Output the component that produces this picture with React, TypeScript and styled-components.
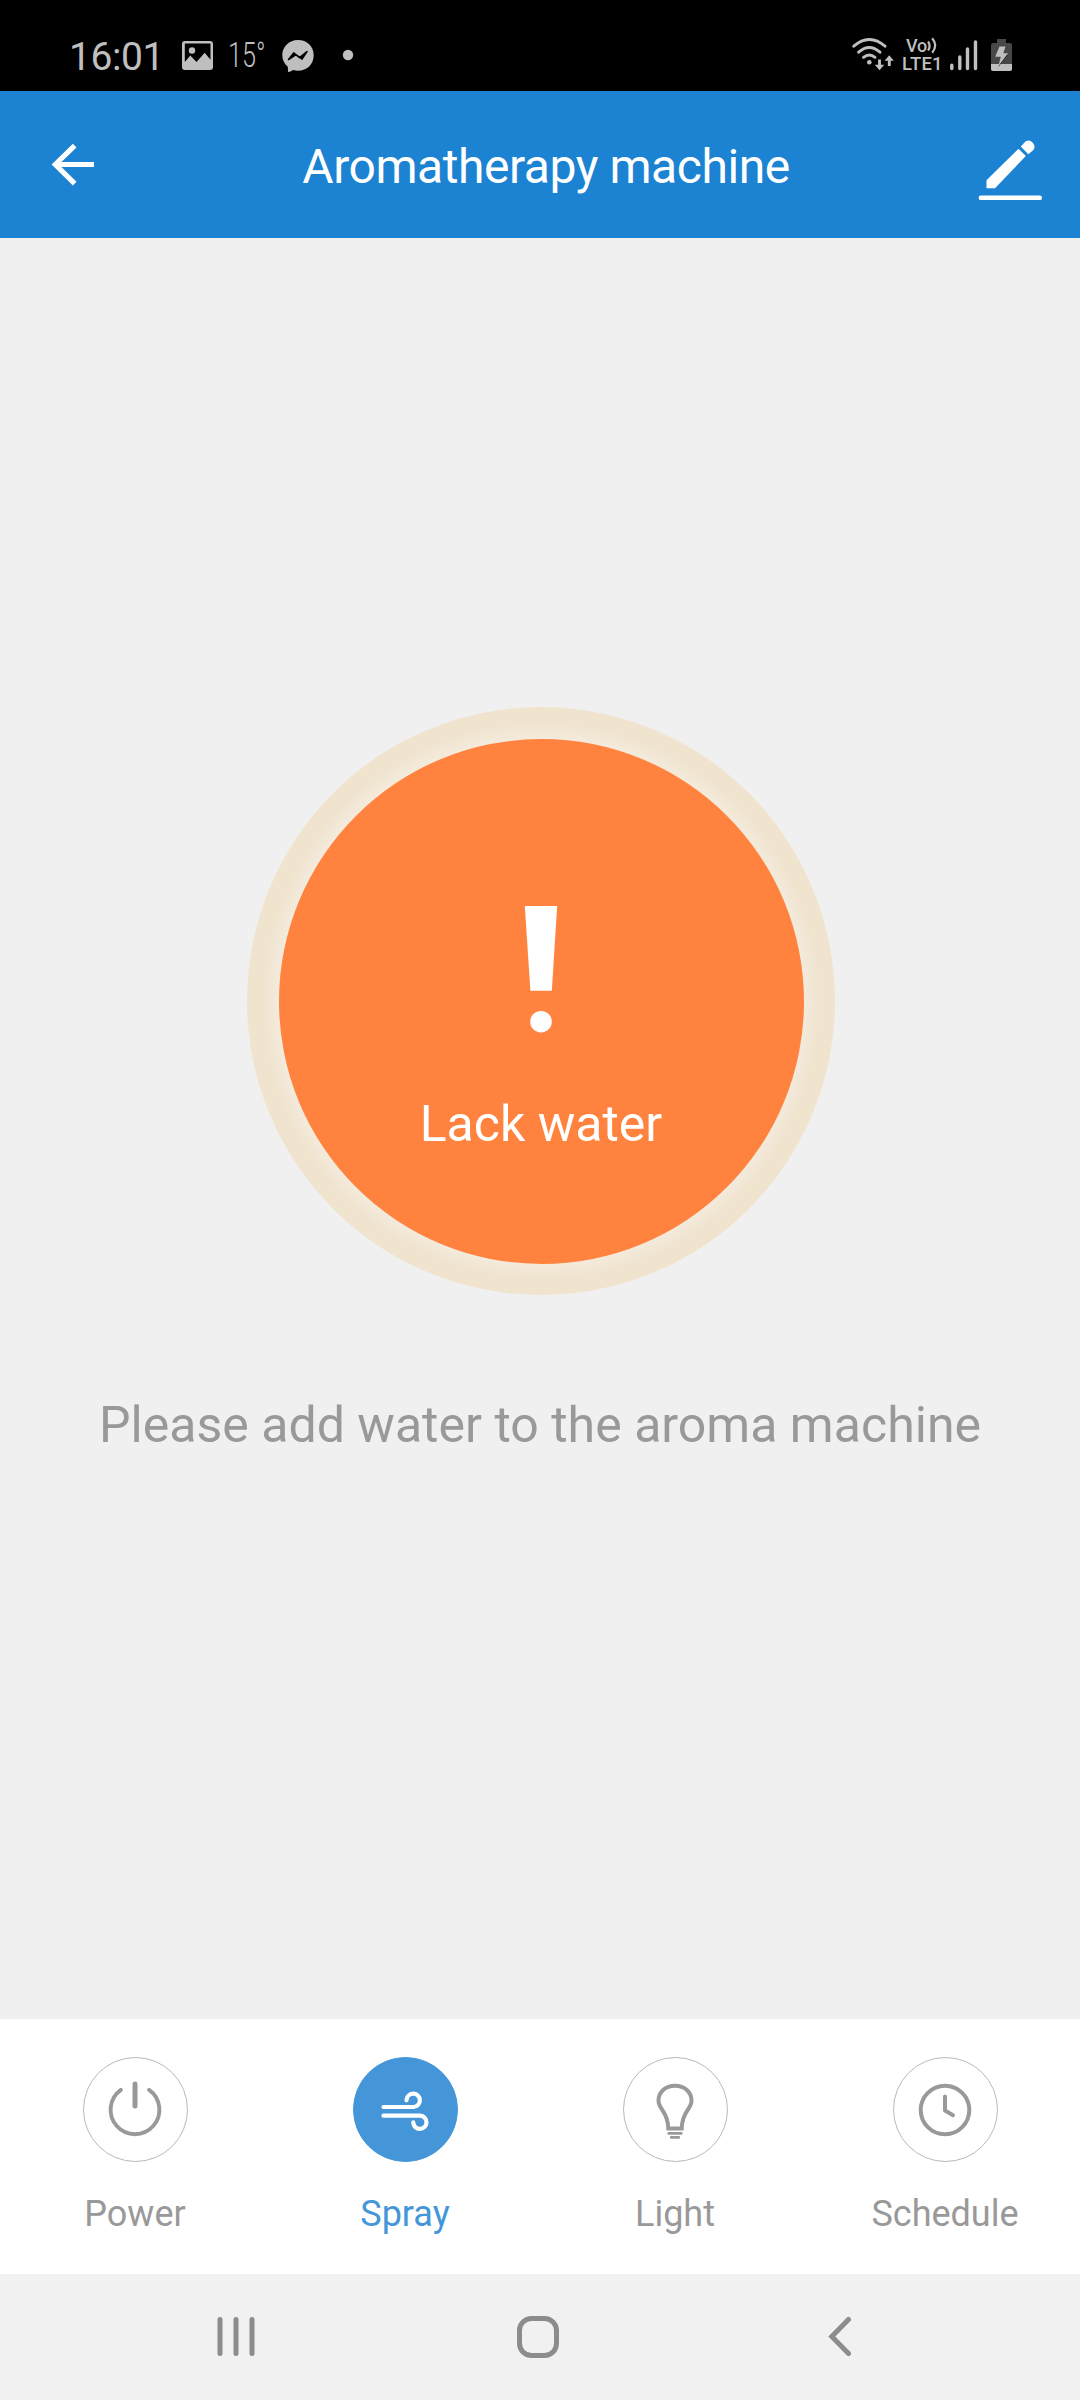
import React from "react";
import styled, { createGlobalStyle } from "styled-components";

const GlobalStyle = createGlobalStyle`
  * { box-sizing: border-box; }
  body { margin: 0; background: #f0f0f0; font-family: Roboto, "Noto Sans", sans-serif; }
  svg { display: block; flex: none; }
`;

const Screen = styled.div`
  width: 1080px;
  height: 2400px;
  display: flex;
  flex-direction: column;
  overflow: hidden;
  background: #f0f0f0;
`;

const StatusBar = styled.div`
  height: 91px;
  flex: none;
  display: flex;
  justify-content: space-between;
  padding: 38px 67px 0 69px;
  background: #000;
  color: #bfbfbf;
`;

const StatusGroup = styled.div`
  display: flex;
  align-items: flex-start;
`;

const Spacer = styled.span<{ $width: number }>`
  width: ${(p) => p.$width}px;
  flex: none;
`;

const Clock = styled.span`
  width: 113px;
  margin-top: -4px;
  font-size: 39px;
  line-height: 46px;
  letter-spacing: -0.4px;
  white-space: nowrap;
`;

const Temperature = styled.span`
  width: 54px;
  padding-left: 14px;
  margin-top: -2px;
  font-size: 35px;
  font-weight: 300;
  line-height: 40px;
  white-space: nowrap;
  transform: scaleX(0.72);
  transform-origin: 14px 50%;
`;

const Volte = styled.div`
  width: 49px;
  flex: none;
  display: flex;
  flex-direction: column;
  margin-top: -1px;
  padding-left: 8px;
  font-size: 18.5px;
  font-weight: 500;
  line-height: 18px;
  letter-spacing: 0.2px;
  white-space: nowrap;
`;

const VolteTop = styled.div`
  display: flex;
  height: 18px;
  padding-left: 4px;
  font-size: 18px;
  letter-spacing: -0.3px;
`;

const Header = styled.header`
  height: 147px;
  flex: none;
  display: flex;
  align-items: center;
  justify-content: space-between;
  padding: 0 37px 0 51px;
  background: #1c82d2;
  color: #fff;
`;

const IconButton = styled.button<{ $shift?: number }>`
  width: 66px;
  padding: 0;
  margin-top: ${(p) => p.$shift ?? 0}px;
  border: 0;
  background: none;
  color: inherit;
`;

const Title = styled.h1`
  margin: 0;
  padding: 4px 2px 0 0;
  font-size: 48px;
  font-weight: 400;
  line-height: 56px;
  letter-spacing: -0.45px;
  white-space: nowrap;
`;

const Main = styled.main`
  flex: 1;
  display: flex;
  flex-direction: column;
  align-items: center;
  padding-top: 469px;
`;

const Ring = styled.div`
  width: 588px;
  height: 588px;
  flex: none;
  display: flex;
  align-items: center;
  justify-content: center;
  margin-left: 2px;
  border-radius: 50%;
  background: radial-gradient(circle closest-side, #f4ebdd 89%, #f2e7d5 92%, #f0e4cf 95%);
`;

const Disc = styled.div`
  width: 525px;
  height: 525px;
  display: flex;
  flex-direction: column;
  align-items: center;
  padding-top: 167px;
  border-radius: 50%;
  background: #ff833f;
  color: #fff;
`;

const DiscLabel = styled.div`
  margin-top: 61px;
  font-size: 50px;
  line-height: 60px;
  white-space: nowrap;
`;

const Message = styled.p`
  margin: 100px 0 0;
  font-size: 50px;
  line-height: 60px;
  letter-spacing: 0.02px;
  color: #999;
  white-space: nowrap;
`;

const Tabs = styled.nav`
  height: 255px;
  flex: none;
  display: grid;
  grid-template-columns: repeat(4, 1fr);
  padding-top: 38px;
  background: #fff;
`;

const Tab = styled.div<{ $active?: boolean }>`
  display: flex;
  flex-direction: column;
  align-items: center;
  color: ${(p) => (p.$active ? "#4496d8" : "#999")};
`;

const TabCircle = styled.div<{ $active?: boolean }>`
  width: 105px;
  height: 105px;
  display: flex;
  align-items: center;
  justify-content: center;
  border-radius: 50%;
  border: 1px solid ${(p) => (p.$active ? "#4496d8" : "#b8b8b8")};
  background: ${(p) => (p.$active ? "#4496d8" : "#fff")};
  color: ${(p) => (p.$active ? "#fff" : "#999")};
`;

const TabLabel = styled.span`
  margin-top: 31px;
  font-size: 36px;
  line-height: 42px;
  white-space: nowrap;
`;

const SystemNav = styled.div`
  height: 126px;
  flex: none;
  display: flex;
  align-items: center;
  justify-content: space-between;
  padding: 0 228px 1px 217px;
  background: #f1f1f1;
`;

const HomeButton = styled.div`
  padding-right: 7px;
`;

const PictureIcon = () => (
  <svg width="32" height="36" viewBox="0 0 32 36">
    <path
      fill="currentColor"
      fillRule="evenodd"
      d="M3 3h25a3 3 0 0 1 3 3v23a3 3 0 0 1-3 3H3a3 3 0 0 1-3-3V6a3 3 0 0 1 3-3zM2.800 5.500v18.500l5.500-6.500 6.200 6.500 8.200-9.300 5.800 7V5.500z"
    />
    <circle cx="10" cy="12.500" r="3.200" fill="currentColor" />
  </svg>
);

const MessengerIcon = () => (
  <svg width="32" height="36" viewBox="0 0 32 36">
    <path
      fill="currentColor"
      d="M16 2C7 2 .3 8.700 .3 17.200c0 5 2.200 8.800 5.500 11.500l.2 4.600c0 .7.600 1 1.200.7l4.100-1.900c1.500.4 3 .6 4.700.6 9 0 15.700-6.500 15.700-15.500S25 2 16 2z"
    />
    <path d="M6.500 21.500l5.200-6.600 5.800 4.700 7.500-6.100-5 7.700-6-4.500z" fill="#000" stroke="#000" strokeWidth="1.500" strokeLinejoin="round" />
  </svg>
);

const DotIcon = () => (
  <svg width="44" height="36" viewBox="0 0 44 36">
    <circle cx="34" cy="17" r="5.200" fill="currentColor" />
  </svg>
);

const WifiIcon = () => (
  <svg width="42" height="34" viewBox="0 0 42 34" fill="none" stroke="currentColor" strokeWidth="2.900" strokeLinecap="round">
    <path d="M1.800 8.200Q17.300-5.200 33 8.200" />
    <path d="M6.600 14.200Q17.300 4.800 28 14.200" />
    <path d="M11.500 19.300Q17.300 14.500 23 19.300" />
    <circle cx="17.300" cy="24.300" r="2.300" fill="currentColor" stroke="none" />
    <path d="M27.500 21.500v8.500M37.300 28v-8" strokeLinecap="butt" />
    <path d="M22.800 26.800h9.400l-4.700 5.500zM32.600 22.800h9.200l-4.600-5.500z" fill="currentColor" stroke="none" />
  </svg>
);

const VoWaves = () => (
  <svg width="11" height="18" viewBox="0 0 11 18" fill="none" stroke="currentColor" strokeWidth="2.200">
    <path d="M1 4.500q3.200 4.300 0 9M5.200 1.200q6 7 0 14.600" />
  </svg>
);

const SignalIcon = () => (
  <svg width="29" height="34" viewBox="0 0 29 34" stroke="currentColor" strokeWidth="3.400" strokeLinecap="round">
    <path d="M1.800 27.200v3.300M9.800 19v11.500M17.500 11v19.500M25.500 4v26.500" />
  </svg>
);

const BatteryIcon = () => (
  <svg width="34" height="34" viewBox="2 0 34 34">
    <path d="M20 1h9v4h-9zM16 5h17a2 2 0 0 1 2 2v24a2 2 0 0 1-2 2H16a2 2 0 0 1-2-2V7a2 2 0 0 1 2-2z" fill="#484848" />
    <path d="M14 26h21v5a2 2 0 0 1-2 2H16a2 2 0 0 1-2-2z" fill="currentColor" />
    <path d="M24 16.500L30.500 17l-9 12 2-8z" fill="#000" opacity=".65" />
    <path d="M22.500 8.500h6l-2.200 6.700h4.700L21.500 28l2.200-9.200h-5.500z" fill="currentColor" />
  </svg>
);

const BackArrow = () => (
  <svg width="44" height="44" viewBox="0 0 44 44" fill="none" stroke="#fff" strokeWidth="5.200">
    <path d="M23.700 2.600L4.300 21.500 23.700 40.700M4.500 21.500H43" />
  </svg>
);

const PencilIcon = () => (
  <svg width="66" height="64" viewBox="0 0 66 64" fill="#fff">
    <path d="M9.500 41.200L41.500 9.700l7.300 7.300-30.800 32.300H9.500z" />
    <path d="M43.800 7.400L47.500 3.500C49.500 1.400 52 .8 54.600 2.800c3 2.300 4 6 1.600 8.500l-4.900 4z" />
    <rect x="1.600" y="56.600" width="63.400" height="4.500" rx="2.200" />
  </svg>
);

const BangIcon = () => (
  <svg width="34" height="127" viewBox="0 0 34 127" fill="#fff">
    <path d="M.8 0h32.400l-5.400 84.700H6.400z" />
    <circle cx="17" cy="115.700" r="10.800" />
  </svg>
);

const PowerIcon = () => (
  <svg width="60" height="60" viewBox="0 0 60 60" fill="none" stroke="currentColor" strokeLinecap="round">
    <path d="M15.900 9.900A24.400 24.400 0 1 0 44.100 9.900" strokeWidth="3.900" />
    <path d="M30 4v22" strokeWidth="5" />
  </svg>
);

const SprayIcon = () => (
  <svg width="60" height="60" viewBox="0 0 60 60" fill="none" stroke="currentColor" strokeWidth="4.200" strokeLinecap="round">
    <path d="M8.500 27H38.500A6.700 6.700 0 1 0 31.500 20.300" />
    <path d="M8.500 35.700H45.300A6.600 6.600 0 1 1 38.300 42.300" />
  </svg>
);

const BulbIcon = () => (
  <svg width="60" height="60" viewBox="0 0 60 60" fill="none" stroke="currentColor">
    <path d="M23.300 48.500C23 31 13.500 29.500 13.500 20.700 13.500 12 20.300 5.800 30 5.800s16.500 6.200 16.500 14.900C46.500 29.500 37 31 36.700 48.500z" strokeWidth="4" />
    <path d="M23.700 53.400h12.600M26.200 57.400h7.600" strokeWidth="2.700" strokeLinecap="round" />
  </svg>
);

const ClockIcon = () => (
  <svg width="60" height="60" viewBox="0 0 60 60" fill="none" stroke="currentColor" strokeWidth="4" strokeLinecap="round" strokeLinejoin="round">
    <circle cx="30" cy="30" r="24.300" />
    <path d="M30 16.500V30.500l8 4.700" />
  </svg>
);

const RecentsIcon = () => (
  <svg width="38" height="42" viewBox="0 0 38 42" stroke="#8c8c8c" strokeWidth="5" strokeLinecap="round">
    <path d="M3 3.500v34M19 3.500v34M35 3.500v34" />
  </svg>
);

const HomeIcon = () => (
  <svg width="44" height="44" viewBox="0 0 44 44" fill="none" stroke="#8c8c8c" strokeWidth="5">
    <rect x="3.500" y="3.500" width="37" height="37" rx="12" />
  </svg>
);

const BackIcon = () => (
  <svg width="24" height="42" viewBox="0 0 24 42" fill="none" stroke="#8c8c8c" strokeWidth="5" strokeLinecap="round">
    <path d="M20.500 3.500L3.800 20.500l16.700 17" />
  </svg>
);

const tabs = [
  { label: "Power", icon: <PowerIcon /> },
  { label: "Spray", icon: <SprayIcon />, active: true },
  { label: "Light", icon: <BulbIcon /> },
  { label: "Schedule", icon: <ClockIcon /> },
];

export default function App() {
  return (
    <>
      <GlobalStyle />
      <Screen>
        <StatusBar>
          <StatusGroup>
            <Clock>16:01</Clock>
            <PictureIcon />
            <Temperature>15°</Temperature>
            <Spacer $width={14} />
            <MessengerIcon />
            <DotIcon />
          </StatusGroup>
          <StatusGroup>
            <WifiIcon />
            <Volte>
              <VolteTop>
                Vo
                <VoWaves />
              </VolteTop>
              <span>LTE1</span>
            </Volte>
            <Spacer $width={7} />
            <SignalIcon />
            <BatteryIcon />
          </StatusGroup>
        </StatusBar>
        <Header>
          <IconButton aria-label="Back">
            <BackArrow />
          </IconButton>
          <Title>Aromatherapy machine</Title>
          <IconButton aria-label="Edit" $shift={13}>
            <PencilIcon />
          </IconButton>
        </Header>
        <Main>
          <Ring>
            <Disc>
              <BangIcon />
              <DiscLabel>Lack water</DiscLabel>
            </Disc>
          </Ring>
          <Message>Please add water to the aroma machine</Message>
        </Main>
        <Tabs>
          {tabs.map((t) => (
            <Tab key={t.label} $active={t.active}>
              <TabCircle $active={t.active}>{t.icon}</TabCircle>
              <TabLabel>{t.label}</TabLabel>
            </Tab>
          ))}
        </Tabs>
        <SystemNav>
          <RecentsIcon />
          <HomeButton>
            <HomeIcon />
          </HomeButton>
          <BackIcon />
        </SystemNav>
      </Screen>
    </>
  );
}
